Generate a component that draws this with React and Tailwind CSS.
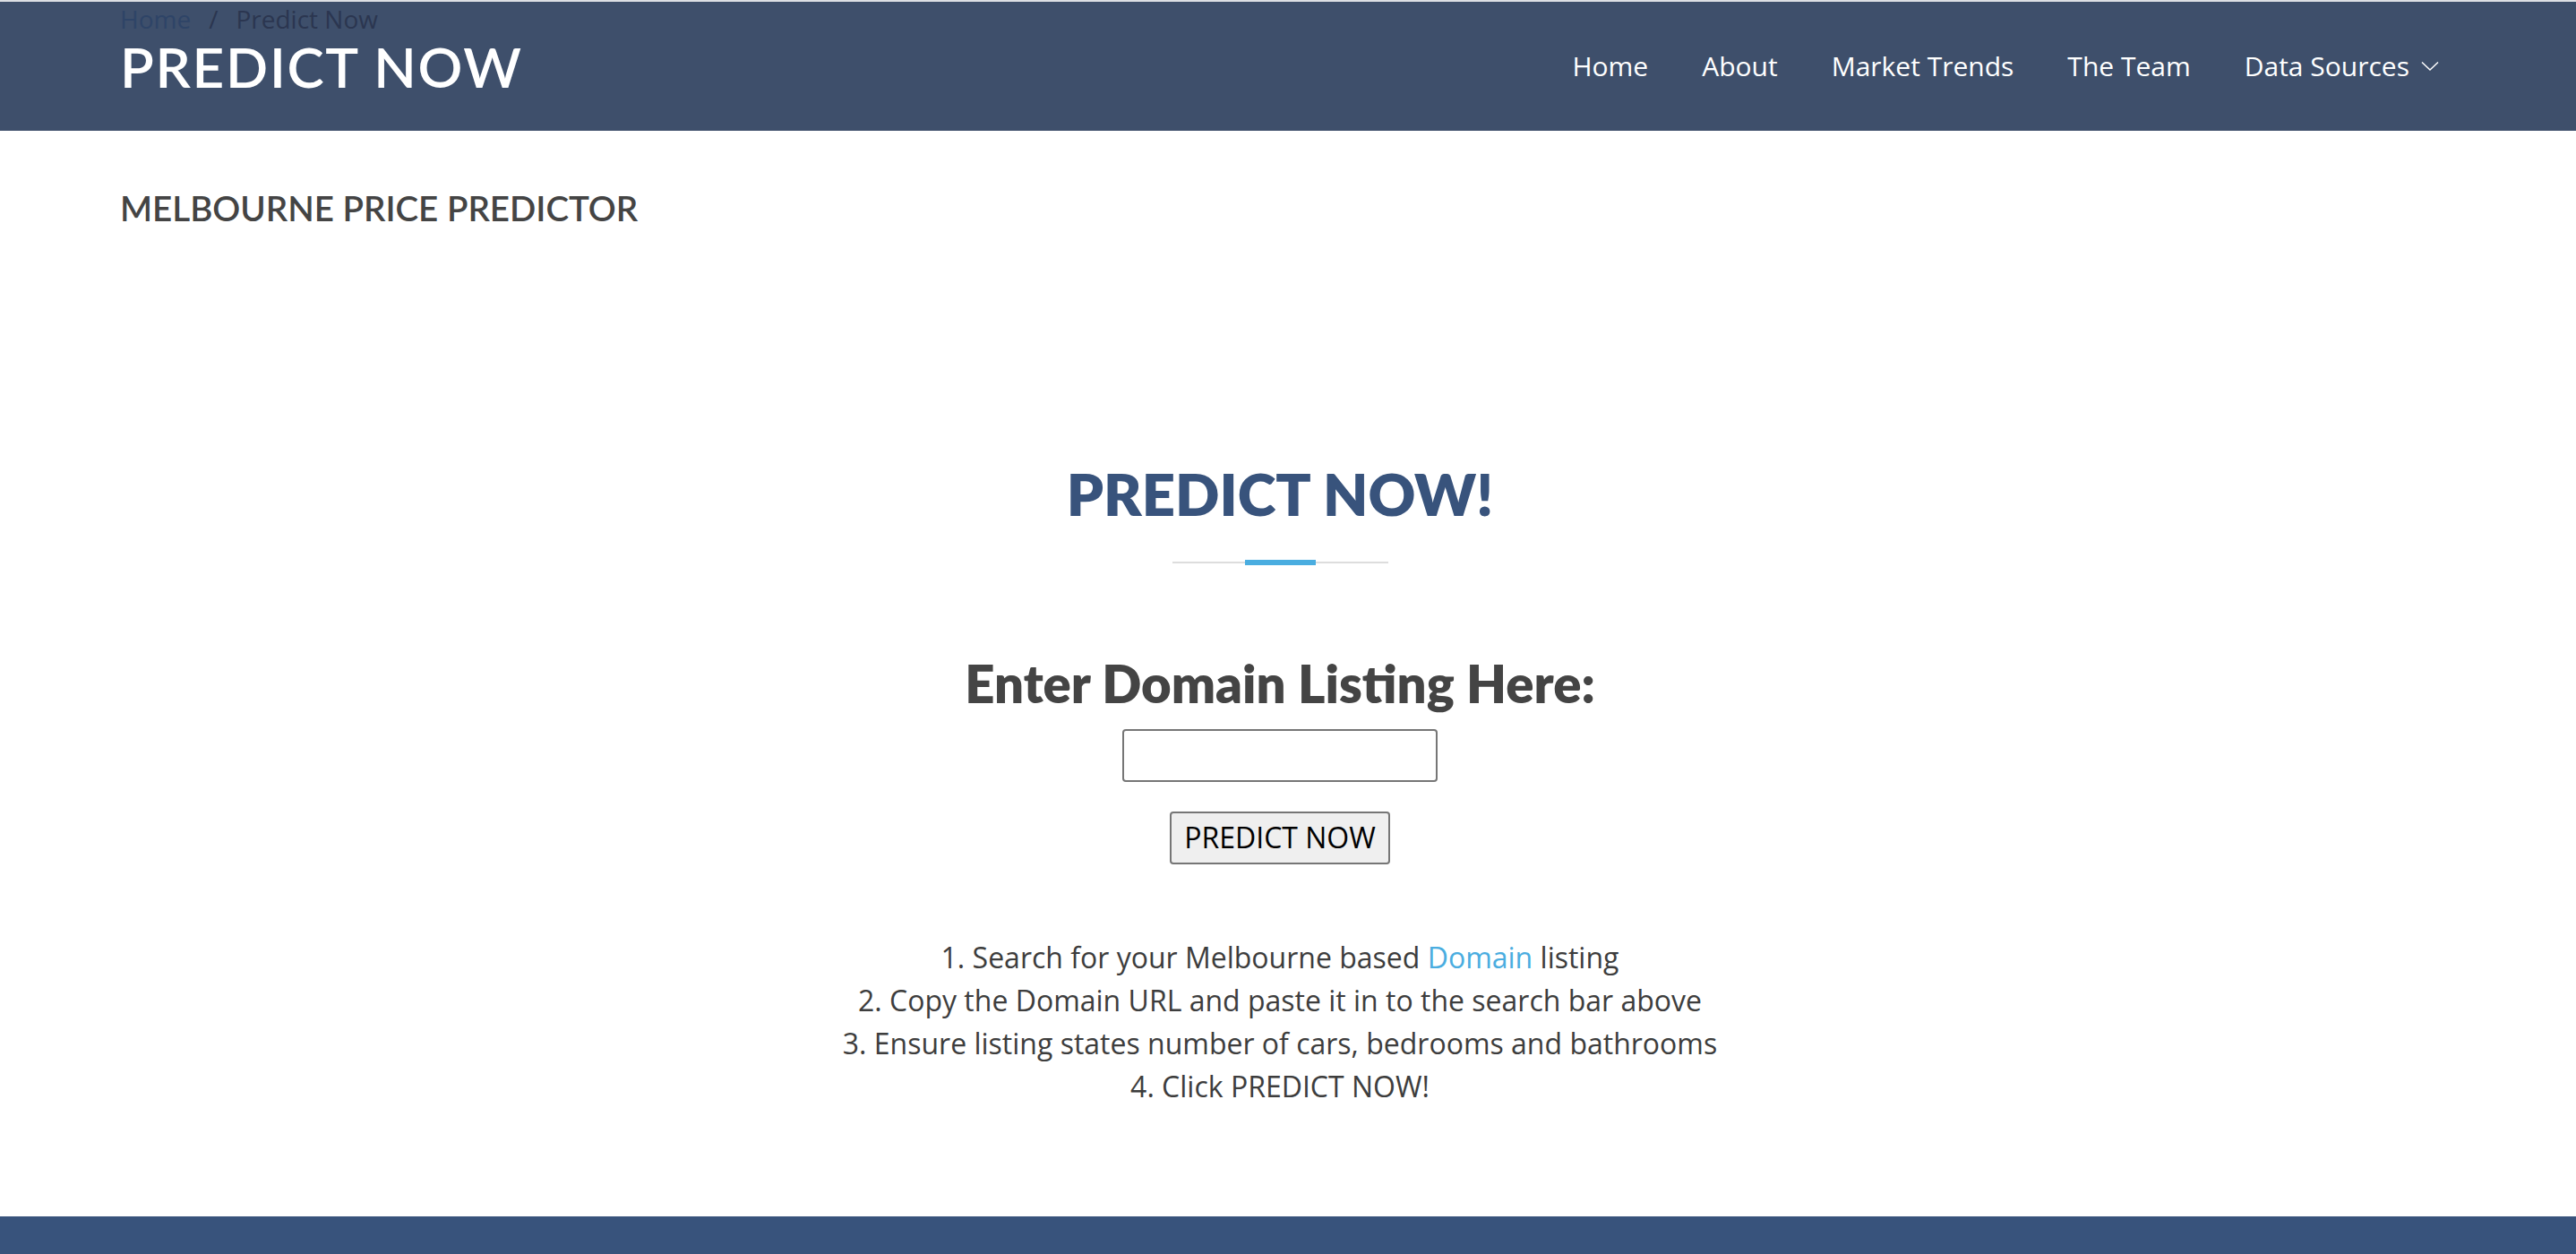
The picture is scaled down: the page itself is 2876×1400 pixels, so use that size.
import React from 'react';

const navItems = ['Home', 'About', 'Market Trends', 'The Team'];

const steps = [
  <>1. Search for your Melbourne based <a href="#" className="text-[#4aade0]">Domain</a> listing</>,
  <>2. Copy the Domain URL and paste it in to the search bar above</>,
  <>3. Ensure listing states number of cars, bedrooms and bathrooms</>,
  <>4. Click PREDICT NOW!</>,
];

export default function App() {
  return (
    <div className="min-h-screen flex flex-col bg-white font-['Open_Sans',sans-serif]">
      {/* Header */}
      <header className="relative h-[146px] bg-[#3e4f6b] border-t-2 border-[#dcdfe4]">
        <div className="h-full px-[134px] flex items-center justify-between">
          <a href="#" className="font-['Lato',sans-serif] font-semibold text-white text-[62px] leading-none tracking-[1.7px]">
            PREDICT NOW
          </a>
          <nav className="flex items-center gap-[60px] pr-[19px] text-white text-[30px]">
            {navItems.map((item) => (
              <a key={item} href="#" className="leading-none">{item}</a>
            ))}
            <a href="#" className="flex items-center gap-[13px] leading-none">
              Data Sources
              <svg width="20" height="12" viewBox="0 0 20 12" fill="none" stroke="white" strokeWidth="1.5">
                <polyline points="1,1.5 10,10 19,1.5" />
              </svg>
            </a>
          </nav>
        </div>
        <div className="absolute left-[134px] top-[5px] flex items-center gap-[20px] text-[28px] leading-none">
          <a href="#" className="text-[#2e4467]">Home</a>
          <span className="text-[#2b3650]">/</span>
          <span className="text-[#2b3650]">Predict Now</span>
        </div>
      </header>

      <section className="px-[134px] pt-[67px]">
        <h2 className="font-['Lato',sans-serif] font-semibold text-[38.5px] leading-none text-[#444444]">
          MELBOURNE PRICE PREDICTOR
        </h2>
      </section>

      <main className="flex flex-col items-center pt-[267px] pr-[18px]">
        <h2 className="font-['Lato',sans-serif] font-extrabold text-[65px] leading-none text-[#38537c]">
          PREDICT NOW!
        </h2>
        <div className="mt-[41px] w-[241px] h-[6px] flex items-center">
          <div className="flex-1 h-[2px] bg-[#dddddd]" />
          <div className="w-[79px] h-[6px] bg-[#4aade0]" />
          <div className="flex-1 h-[2px] bg-[#dddddd]" />
        </div>

        <h3 className="mt-[103px] font-['Lato',sans-serif] font-extrabold text-[58px] leading-none text-[#444444]">
          Enter Domain Listing Here:
        </h3>
        <input
          type="text"
          className="mt-[22px] w-[352px] h-[59px] border-2 border-[#767676] rounded-[4px] bg-white px-2 text-[29px]"
        />
        <button className="mt-[33px] w-[246px] h-[59px] border-2 border-[#767676] rounded-[4px] bg-[#efefef] text-black text-[32px] leading-none">
          PREDICT NOW
        </button>

        <div className="mt-[80px] text-center text-[#3d3d3d] text-[32px] leading-[48px]">
          {steps.map((s, i) => (
            <p key={i}>{s}</p>
          ))}
        </div>
      </main>

      <footer className="mt-auto h-[42px] bg-[#38537c]" />
    </div>
  );
}
